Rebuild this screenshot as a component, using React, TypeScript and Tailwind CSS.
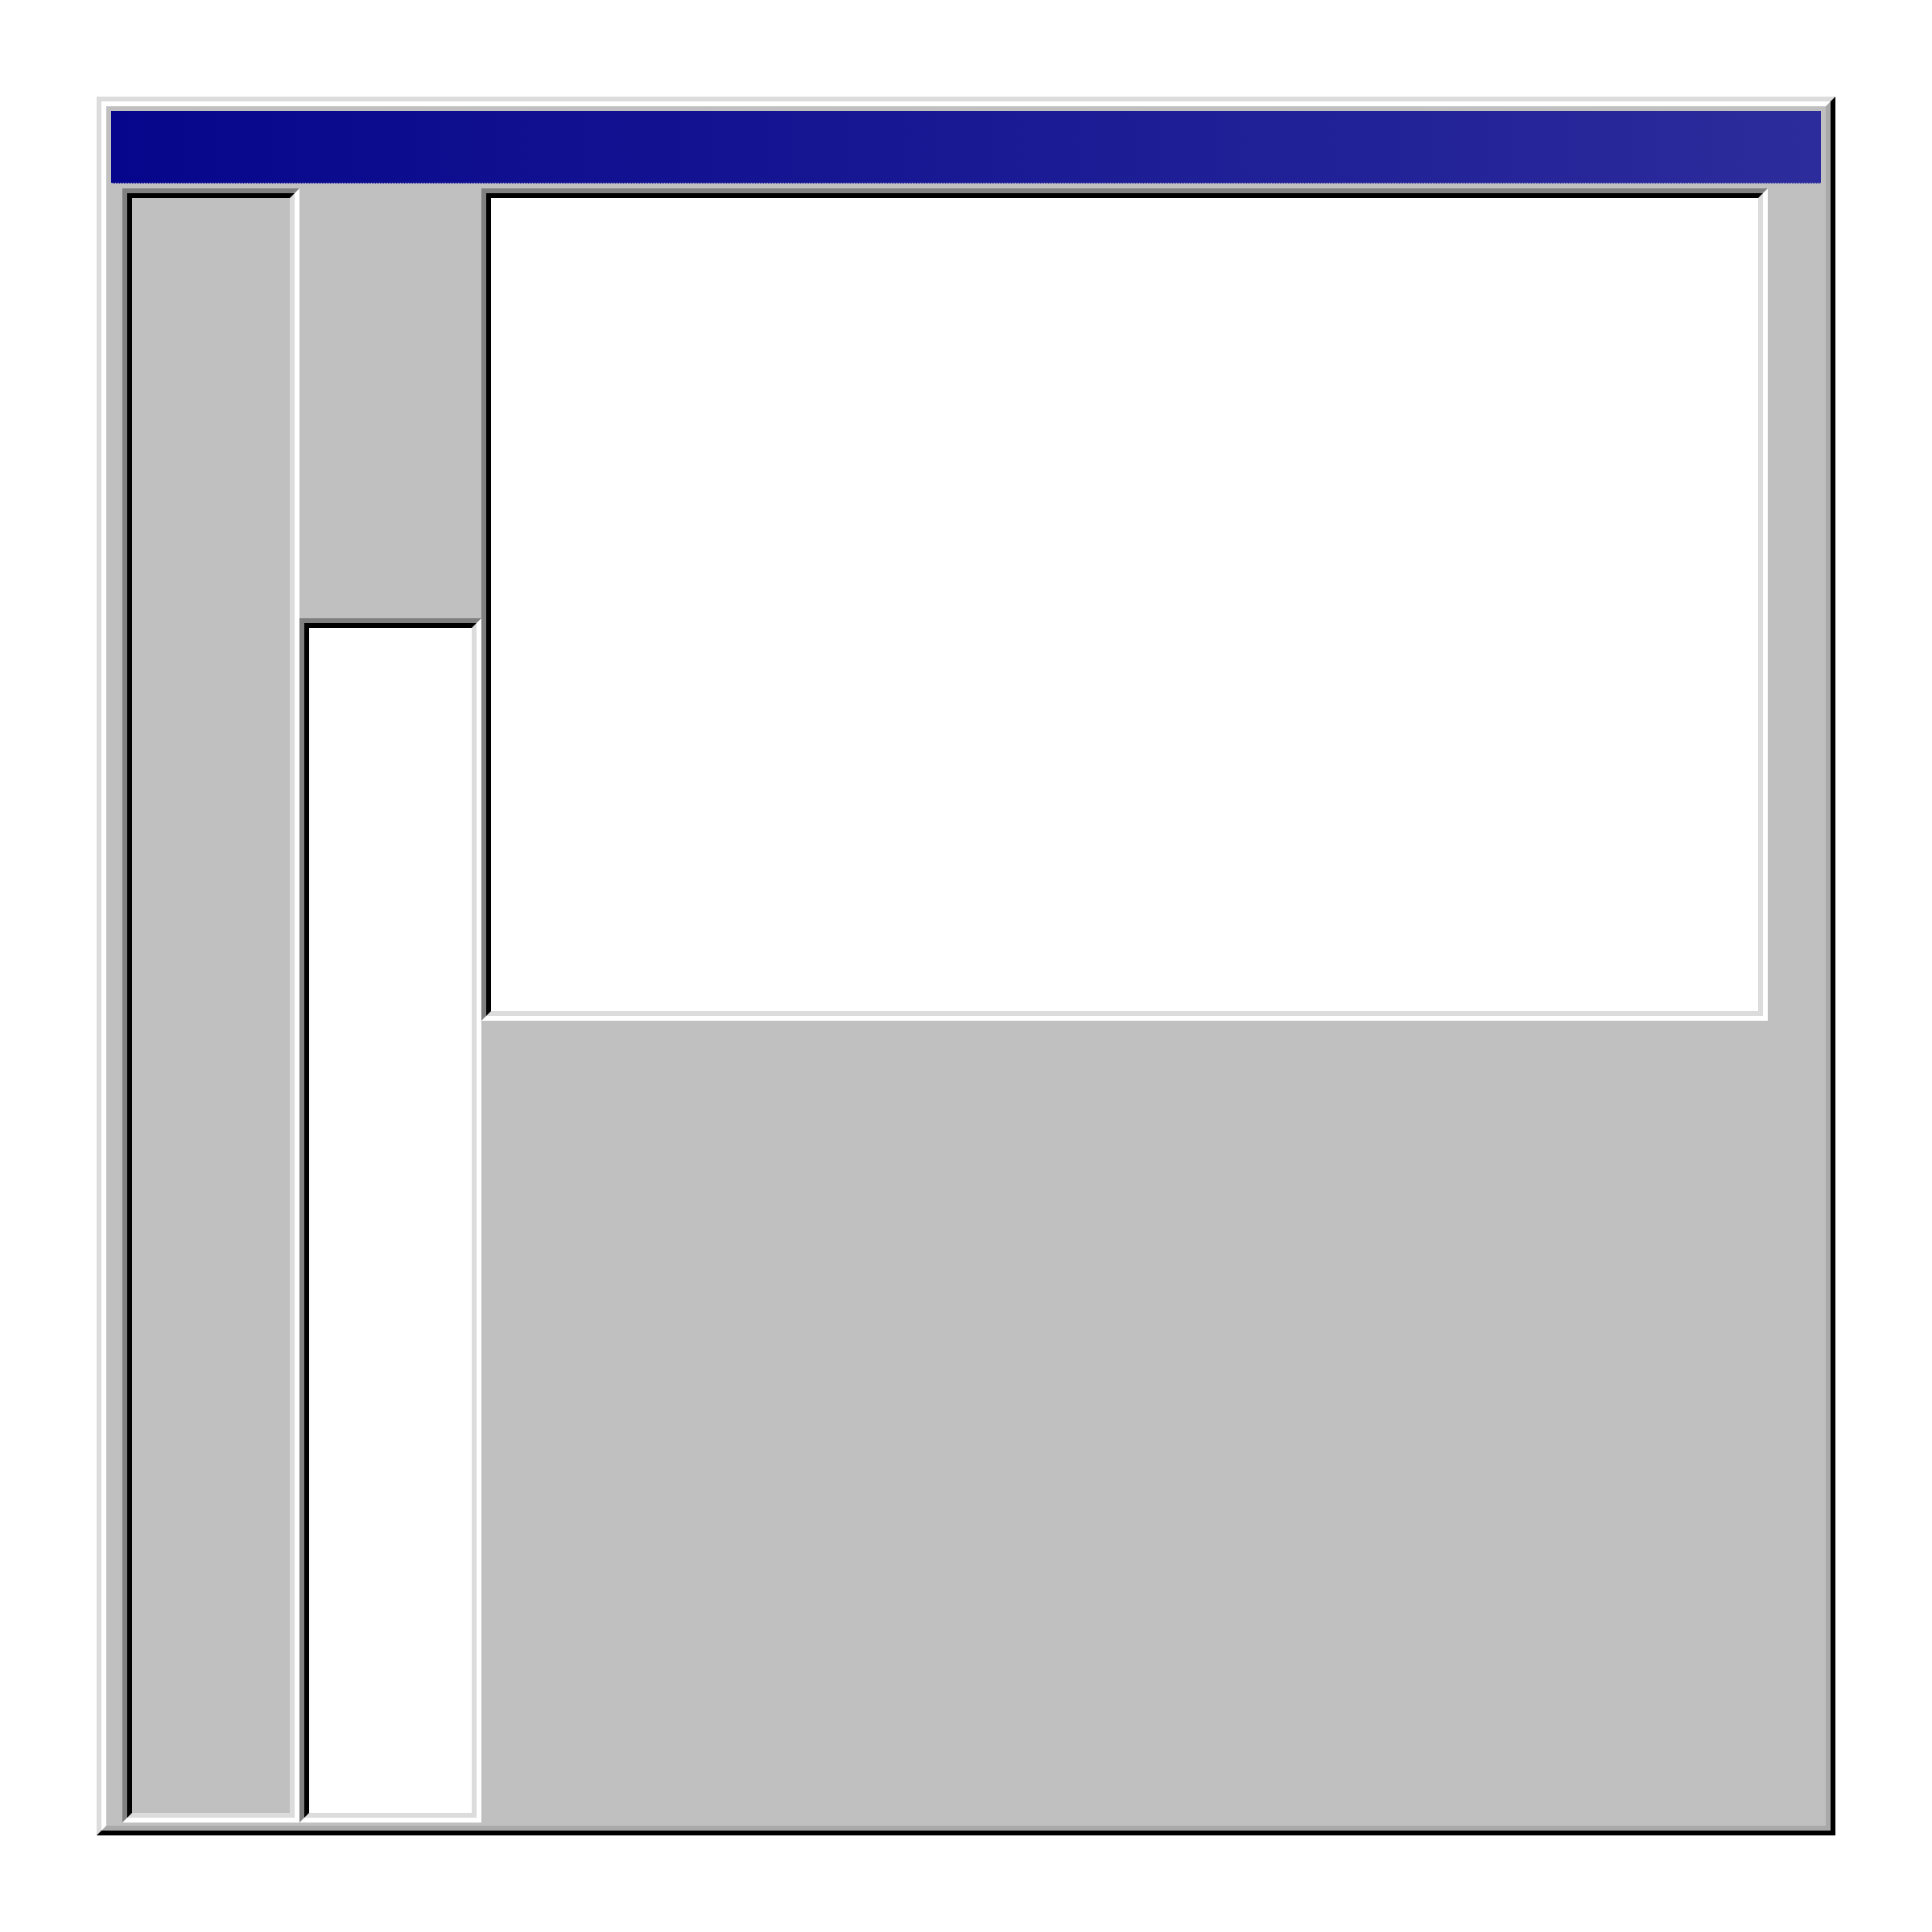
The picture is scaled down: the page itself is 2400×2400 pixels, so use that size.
import React from "react";

function Sunken({ className, inner, children }: { className?: string; inner: string; children?: React.ReactNode }) {
  return (
    <div className={"flex border-[6px] border-t-[#808080] border-l-[#808080] border-b-white border-r-white " + (className ?? "")}>
      <div className={"flex-1 border-[6px] border-t-black border-l-black border-b-[#dcdcdc] border-r-[#dcdcdc] " + inner}>{children}</div>
    </div>
  );
}

export default function App() {
  return (
    <div className="w-[2400px] h-[2400px] bg-white p-[120px]">
      <div className="flex w-[2160px] h-[2160px] border-[6px] border-t-[#dcdcdc] border-l-[#dcdcdc] border-b-black border-r-black">
        <div className="flex-1 flex flex-col border-[6px] border-t-white border-l-white border-b-[#a9a9a9] border-r-[#a9a9a9] bg-[#c0c0c0] px-[6px] pt-[6px] pb-[4px]">
          <div className="h-[90px] shrink-0 bg-linear-to-r/srgb from-[#06068c] to-[#2c2c9c] border-b border-dotted border-b-[#a8a8c8]" />
          <div className="flex flex-1 mt-[6px] ml-[14px]">
            <Sunken className="w-[220px]" inner="bg-[#c0c0c0]" />
            <div className="flex flex-col w-[226px]">
              <div className="h-[534px] shrink-0" />
              <Sunken className="flex-1" inner="bg-white" />
            </div>
            <Sunken className="w-[1598px] h-[1034px]" inner="bg-white" />
          </div>
        </div>
      </div>
    </div>
  );
}
